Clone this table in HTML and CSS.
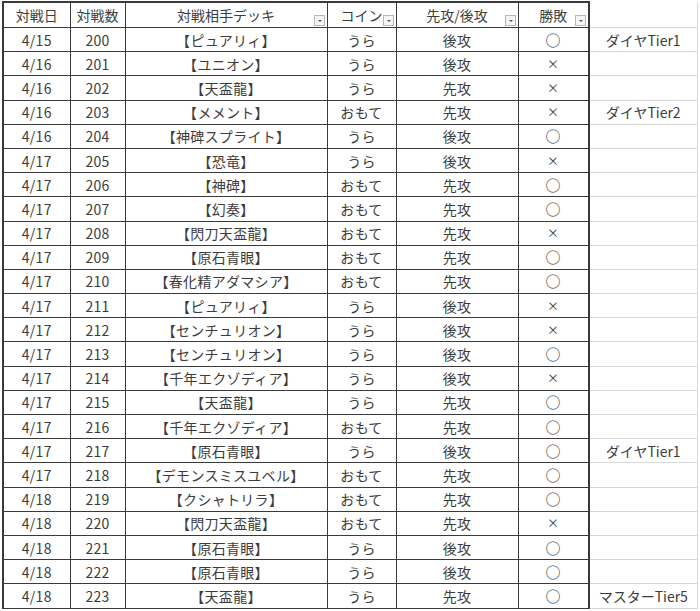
FILE: index.html
```html
<!DOCTYPE html>
<html lang="ja">
<head>
<meta charset="utf-8">
<link rel="stylesheet" href="styles.css">
</head>
<body>
<table class="sheet">
  <colgroup>
    <col class="c1"><col class="c2"><col class="c3"><col class="c4"><col class="c5"><col class="c6"><col class="c7">
  </colgroup>
  <thead>
    <tr>
      <th>対戦日</th>
      <th>対戦数</th>
      <th class="flt">対戦相手デッキ<span class="dd"></span></th>
      <th class="flt">コイン<span class="dd"></span></th>
      <th class="flt">先攻/後攻<span class="dd"></span></th>
      <th class="flt last">勝敗<span class="dd"></span></th>
      <th class="ext"></th>
    </tr>
  </thead>
  <tbody>
    <tr><td>4/15</td><td>200</td><td>【ピュアリィ】</td><td>うら</td><td>後攻</td><td class="last o">○</td><td class="ext">ダイヤTier1</td></tr>
    <tr><td>4/16</td><td>201</td><td>【ユニオン】</td><td>うら</td><td>後攻</td><td class="last x">×</td><td class="ext"></td></tr>
    <tr><td>4/16</td><td>202</td><td>【天盃龍】</td><td>うら</td><td>先攻</td><td class="last x">×</td><td class="ext"></td></tr>
    <tr><td>4/16</td><td>203</td><td>【メメント】</td><td>おもて</td><td>先攻</td><td class="last x">×</td><td class="ext">ダイヤTier2</td></tr>
    <tr><td>4/16</td><td>204</td><td>【神碑スプライト】</td><td>うら</td><td>後攻</td><td class="last o">○</td><td class="ext"></td></tr>
    <tr><td>4/17</td><td>205</td><td>【恐竜】</td><td>うら</td><td>後攻</td><td class="last x">×</td><td class="ext"></td></tr>
    <tr><td>4/17</td><td>206</td><td>【神碑】</td><td>おもて</td><td>先攻</td><td class="last o">○</td><td class="ext"></td></tr>
    <tr><td>4/17</td><td>207</td><td>【幻奏】</td><td>おもて</td><td>先攻</td><td class="last o">○</td><td class="ext"></td></tr>
    <tr><td>4/17</td><td>208</td><td>【閃刀天盃龍】</td><td>おもて</td><td>先攻</td><td class="last x">×</td><td class="ext"></td></tr>
    <tr><td>4/17</td><td>209</td><td>【原石青眼】</td><td>おもて</td><td>先攻</td><td class="last o">○</td><td class="ext"></td></tr>
    <tr><td>4/17</td><td>210</td><td>【春化精アダマシア】</td><td>おもて</td><td>先攻</td><td class="last o">○</td><td class="ext"></td></tr>
    <tr><td>4/17</td><td>211</td><td>【ピュアリィ】</td><td>うら</td><td>後攻</td><td class="last x">×</td><td class="ext"></td></tr>
    <tr><td>4/17</td><td>212</td><td>【センチュリオン】</td><td>うら</td><td>後攻</td><td class="last x">×</td><td class="ext"></td></tr>
    <tr><td>4/17</td><td>213</td><td>【センチュリオン】</td><td>うら</td><td>後攻</td><td class="last o">○</td><td class="ext"></td></tr>
    <tr><td>4/17</td><td>214</td><td>【千年エクゾディア】</td><td>うら</td><td>後攻</td><td class="last x">×</td><td class="ext"></td></tr>
    <tr><td>4/17</td><td>215</td><td>【天盃龍】</td><td>うら</td><td>先攻</td><td class="last o">○</td><td class="ext"></td></tr>
    <tr><td>4/17</td><td>216</td><td>【千年エクゾディア】</td><td>おもて</td><td>先攻</td><td class="last o">○</td><td class="ext"></td></tr>
    <tr><td>4/17</td><td>217</td><td>【原石青眼】</td><td>うら</td><td>後攻</td><td class="last o">○</td><td class="ext">ダイヤTier1</td></tr>
    <tr><td>4/17</td><td>218</td><td>【デモンスミスユベル】</td><td>おもて</td><td>先攻</td><td class="last o">○</td><td class="ext"></td></tr>
    <tr><td>4/18</td><td>219</td><td>【クシャトリラ】</td><td>おもて</td><td>先攻</td><td class="last o">○</td><td class="ext"></td></tr>
    <tr><td>4/18</td><td>220</td><td>【閃刀天盃龍】</td><td>おもて</td><td>先攻</td><td class="last x">×</td><td class="ext"></td></tr>
    <tr><td>4/18</td><td>221</td><td>【原石青眼】</td><td>うら</td><td>後攻</td><td class="last o">○</td><td class="ext"></td></tr>
    <tr><td>4/18</td><td>222</td><td>【原石青眼】</td><td>うら</td><td>後攻</td><td class="last o">○</td><td class="ext"></td></tr>
    <tr><td>4/18</td><td>223</td><td>【天盃龍】</td><td>うら</td><td>先攻</td><td class="last o">○</td><td class="ext">マスターTier5</td></tr>
  </tbody>
</table>
</body>
</html>
```

FILE: styles.css
```css
html, body {
  margin: 0;
  padding: 0;
  background: #ffffff;
}

.sheet {
  margin: 1px 0 0 2px;
  border-collapse: collapse;
  table-layout: fixed;
  width: 694px;
  font-family: "Noto Sans CJK JP", "Noto Sans", sans-serif;
  font-size: 14px;
  color: #3c3c3c;
}

.c1 { width: 67px; }
.c2 { width: 55px; }
.c3 { width: 202px; }
.c4 { width: 69px; }
.c5 { width: 122px; }
.c6 { width: 71px; }
.c7 { width: 108px; }

.sheet th,
.sheet td {
  border: 1px solid #3a3a3a;
  padding: 0;
  text-align: center;
  vertical-align: middle;
  font-weight: normal;
  line-height: 18px;
  white-space: nowrap;
  overflow: hidden;
}

.sheet th {
  height: 24px;
  position: relative;
}

.sheet td {
  height: 23.2px;
  letter-spacing: 0.3px;
}

.sheet thead th {
  border-top: 2px solid #3a3a3a;
}

.sheet tr > :first-child {
  border-left: 2px solid #3a3a3a;
}

.sheet .last {
  border-right: 2px solid #3a3a3a;
}

.sheet .ext {
  border: 1px solid #d9d9d9;
  border-left: none;
  letter-spacing: 0;
}

.sheet thead .ext {
  border-top: none;
}

.o {
  font-size: 15px;
}

.x {
  font-size: 12px;
}

.dd {
  position: absolute;
  right: 2px;
  bottom: 1px;
  width: 11px;
  height: 11px;
  border: 1px solid #b8b8b8;
  background: #f4f4f4;
  box-sizing: border-box;
}

.dd::after {
  content: "";
  position: absolute;
  left: 3px;
  top: 4px;
  border-left: 2px solid transparent;
  border-right: 2px solid transparent;
  border-top: 2px solid #555555;
}
```
